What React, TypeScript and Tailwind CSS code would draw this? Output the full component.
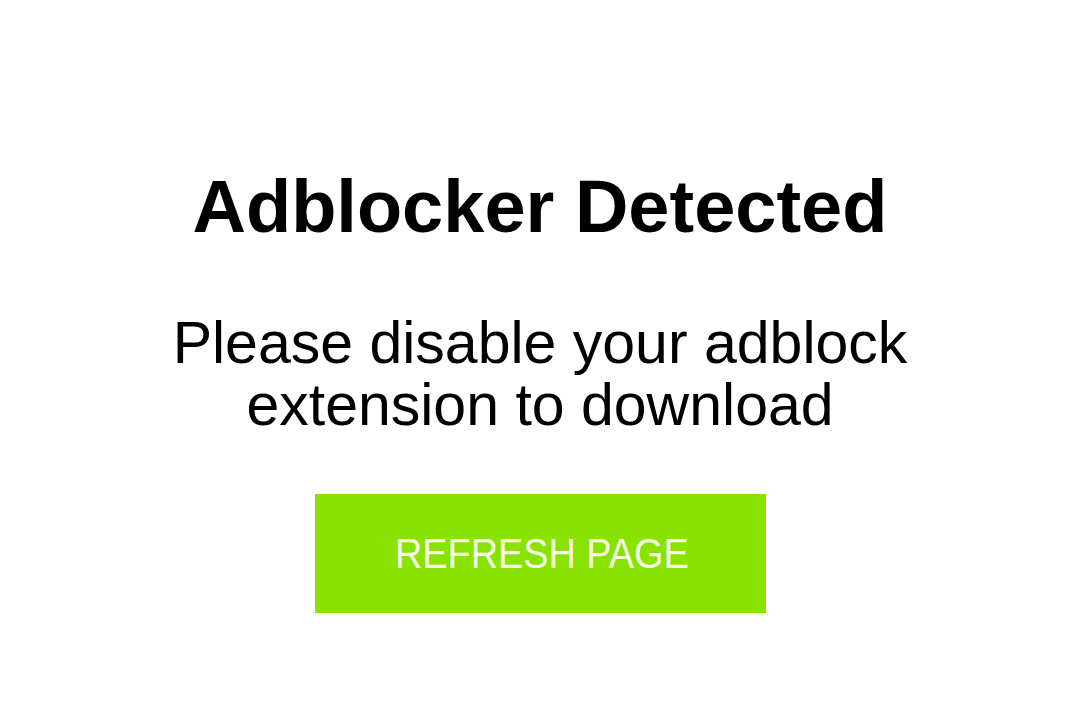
import React from 'react'

export default function App() {
  return (
    <div className="min-h-[722px] w-full bg-white pt-[170px] font-['Liberation_Sans',Arial,sans-serif] text-black">
      <div className="flex flex-col items-center">
        {/* Title */}
        <h1 className="text-[74px] font-bold leading-none">
          Adblocker Detected
        </h1>

        {/* Message */}
        <p className="mt-[68px] text-center text-[59px] font-normal leading-[62px]">
          Please disable your adblock
          <br />
          extension to download
        </p>

        {/* Refresh button */}
        <button className="mt-[58px] flex h-[119px] w-[451px] items-center justify-center bg-[#8ae200] pl-[3px]">
          <span className="inline-block scale-x-[0.88] whitespace-nowrap text-[43px] leading-none text-[#f6ffe8]">
            REFRESH PAGE
          </span>
        </button>
      </div>
    </div>
  )
}
